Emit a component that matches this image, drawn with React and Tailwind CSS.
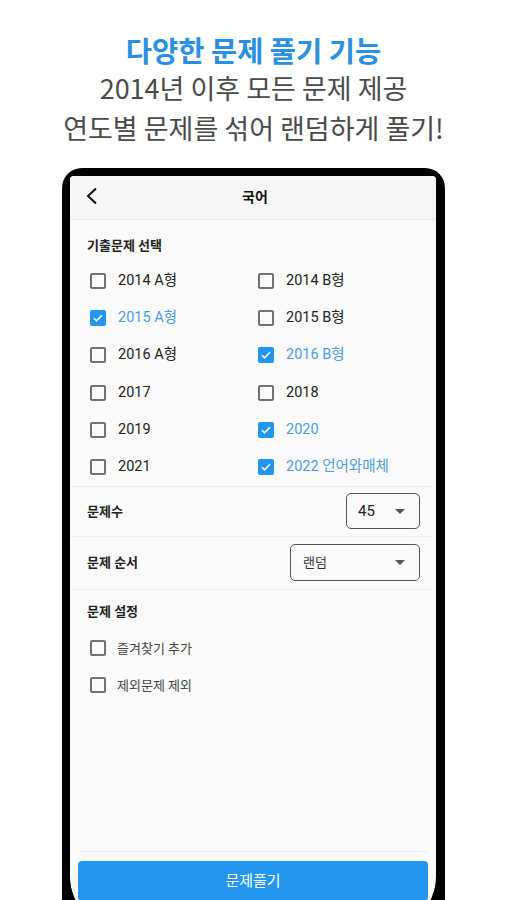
import React from "react";

const years = [
  ["2014 A형", false, "2014 B형", false],
  ["2015 A형", true, "2015 B형", false],
  ["2016 A형", false, "2016 B형", true],
  ["2017", false, "2018", false],
  ["2019", false, "2020", true],
  ["2021", false, "2022 언어와매체", true],
];

function Box({ checked }) {
  if (checked) {
    return (
      <span className="flex h-[16px] w-[16px] shrink-0 items-center justify-center rounded-[2px] bg-[#2196f3]">
        <svg width="12" height="12" viewBox="0 0 24 24" fill="none" stroke="white" strokeWidth="3.2">
          <path d="M4 12.5l5 5L20 6.5" />
        </svg>
      </span>
    );
  }
  return <span className="block h-[16px] w-[16px] shrink-0 rounded-[2px] border-2 border-[#727272]" />;
}

function Check({ label, checked }) {
  return (
    <div className="flex h-[37.3px] items-center">
      <span className="ml-[3px] mr-[12px] block">
        <Box checked={checked} />
      </span>
      <span className={`text-[14.5px] ${checked ? "text-[#4d9de2]" : "text-[#222]"}`}>{label}</span>
    </div>
  );
}

function Caret() {
  return (
    <svg width="10" height="5" viewBox="0 0 10 5" className="fill-[#555]">
      <path d="M0 0h10L5 5z" />
    </svg>
  );
}

export default function App() {
  return (
    <div
      className="flex h-[900px] w-[507px] flex-col items-center overflow-hidden bg-white"
      style={{ fontFamily: 'Roboto, "Noto Sans CJK KR", sans-serif' }}
    >
      <div className="flex flex-col items-center pt-[32px]" style={{ fontFamily: '"Noto Sans CJK KR", sans-serif' }}>
        <div className="text-[28.5px] font-bold leading-[36px] text-[#2b8fe2]">다양한 문제 풀기 기능</div>
        <div className="text-[27px] leading-[39px] text-[#4a4a4a]">2014년 이후 모든 문제 제공</div>
        <div className="text-[27px] leading-[41px] text-[#4a4a4a]">연도별 문제를 섞어 랜덤하게 풀기!</div>
      </div>

      <div className="mt-[20px] h-[770px] w-[383px] shrink-0 rounded-t-[20px] bg-black pl-[8px] pr-[9px] pt-[8px]">
        <div className="flex h-[755px] flex-col overflow-hidden rounded-t-[4px] rounded-b-[55px] bg-[#fafafa]">
          <div className="relative flex h-[44px] shrink-0 items-center justify-center border-b border-[#e9e9e9] bg-[#f6f6f6]">
            <svg className="absolute left-[15px] top-[11px]" width="14" height="18" viewBox="0 0 14 18" fill="none" stroke="#111" strokeWidth="2">
              <path d="M11 1.5L3 9l8 7.5" />
            </svg>
            <span className="pl-[4px] text-[14px] font-bold text-[#111]">국어</span>
          </div>

          <div className="pl-[17px] pt-[16px] text-[13px] font-bold leading-[20px] text-[#222]">기출문제 선택</div>
          <div className="mt-[6px] grid grid-cols-[168px_1fr] pl-[17px]">
            {years.map((r) => (
              <React.Fragment key={r[0]}>
                <Check label={r[0]} checked={r[1]} />
                <Check label={r[2]} checked={r[3]} />
              </React.Fragment>
            ))}
          </div>

          <div className="mr-[4px] border-t border-[#ececec]" />
          <div className="flex h-[49px] items-center justify-between pl-[17px] pr-[16px]">
            <span className="text-[13px] font-bold text-[#222]">문제수</span>
            <div className="flex h-[36px] w-[74px] items-center justify-between rounded-[5px] border border-[#555] pl-[11px] pr-[14px]">
              <span className="text-[15px] text-[#222]">45</span>
              <Caret />
            </div>
          </div>
          <div className="mr-[4px] border-t border-[#ececec]" />
          <div className="flex h-[52px] items-center justify-between pl-[17px] pr-[16px]">
            <span className="text-[13px] font-bold text-[#222]">문제 순서</span>
            <div className="flex h-[37px] w-[130px] items-center justify-between rounded-[5px] border border-[#555] pl-[12px] pr-[14px]">
              <span className="text-[13px] text-[#333]">랜덤</span>
              <Caret />
            </div>
          </div>
          <div className="mr-[4px] border-t border-[#ececec]" />

          <div className="pl-[17px] pt-[12px] text-[13px] font-bold leading-[20px] text-[#222]">문제 설정</div>
          <div className="mt-[8px] flex flex-col pl-[17px]">
            <div className="flex h-[37px] items-center">
              <span className="ml-[3px] mr-[11px] block">
                <Box checked={false} />
              </span>
              <span className="text-[13px] text-[#444]">즐겨찾기 추가</span>
            </div>
            <div className="flex h-[37px] items-center">
              <span className="ml-[3px] mr-[11px] block">
                <Box checked={false} />
              </span>
              <span className="text-[13px] text-[#444]">제외문제 제외</span>
            </div>
          </div>

          <div className="flex-1" />
          <div className="mx-[8px] border-t border-[#efefef]" />
          <div className="mx-[8px] mb-[30px] mt-[9px] flex h-[40px] items-center justify-center rounded-[4px] bg-[#2496ef]">
            <span className="text-[15px] text-white">문제풀기</span>
          </div>
        </div>
      </div>
    </div>
  );
}
